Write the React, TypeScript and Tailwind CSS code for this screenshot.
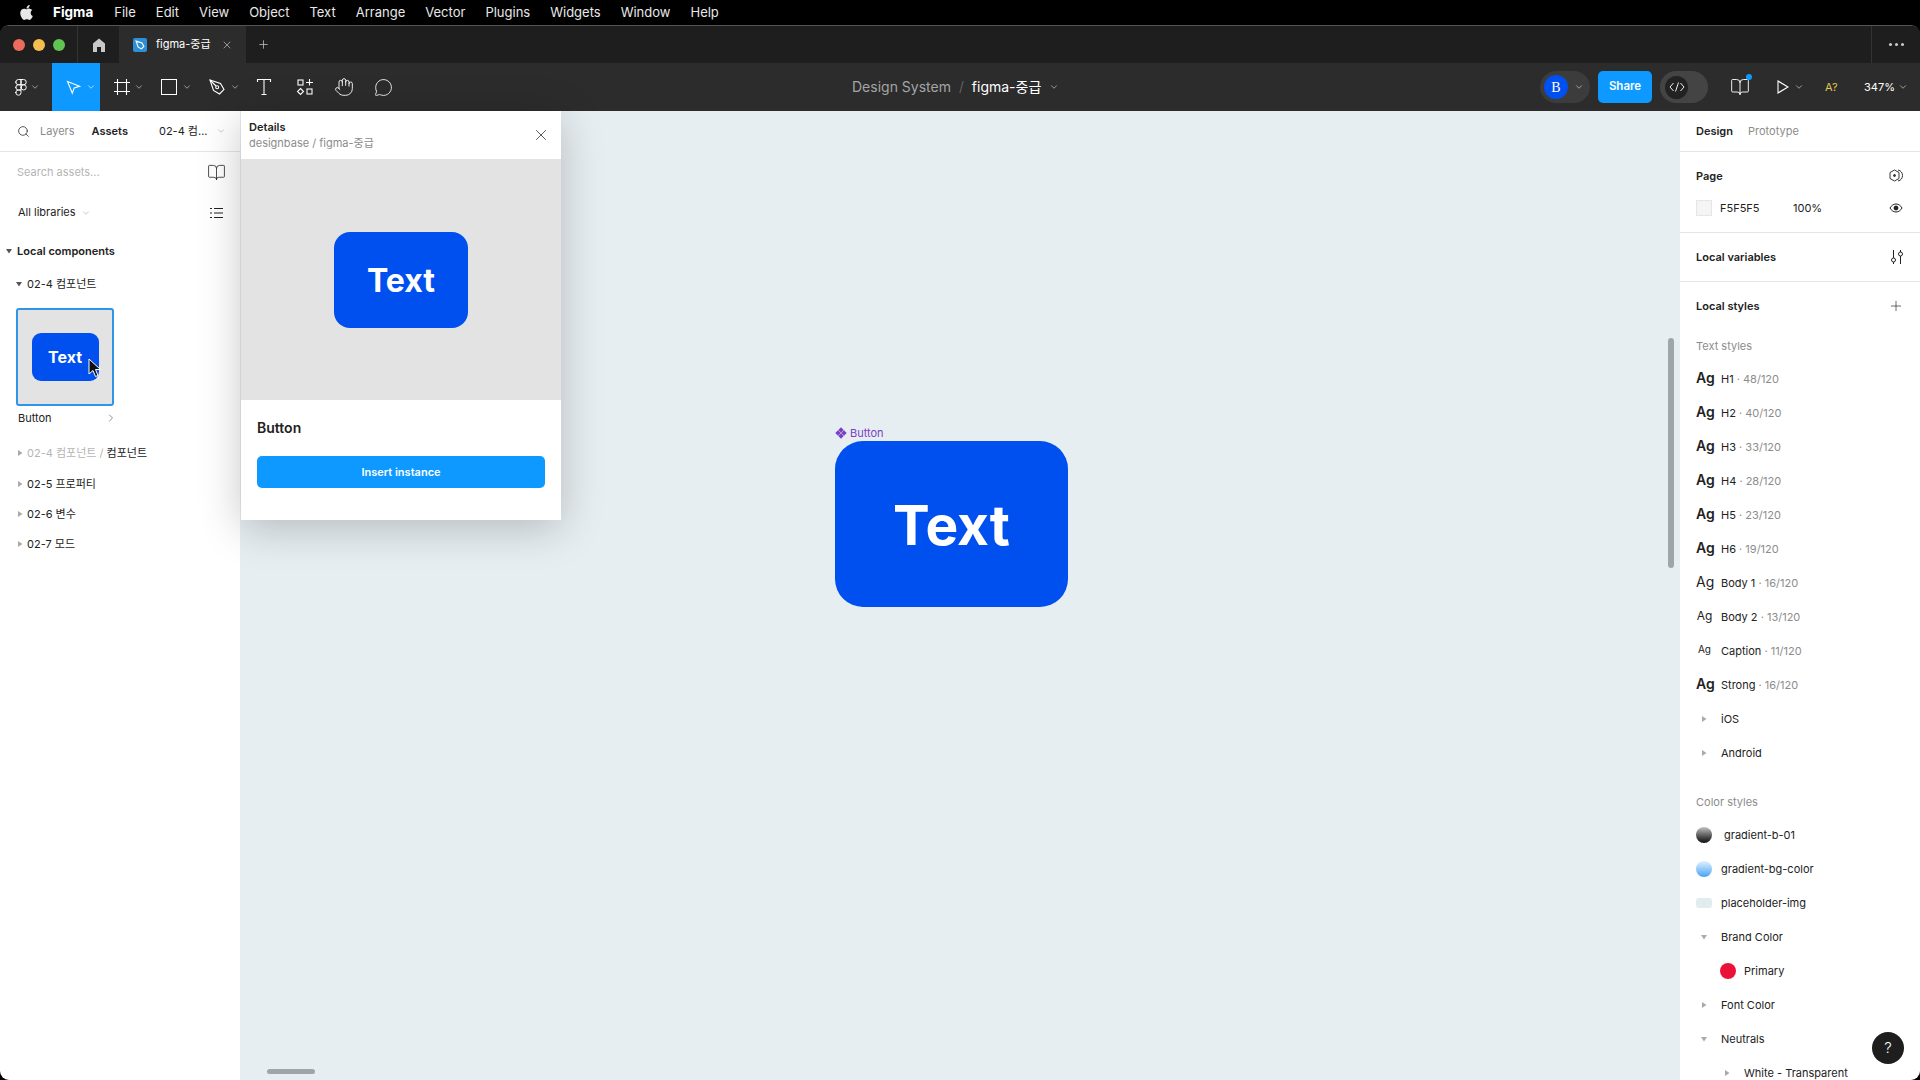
import { BookOpen, ChevronDown, ChevronRight, Figma, Hand, MessageCircle, Plus, Search, X } from 'lucide-react'
import { FaApple } from 'react-icons/fa'

const menus = ['File', 'Edit', 'View', 'Object', 'Text', 'Arrange', 'Vector', 'Plugins', 'Widgets', 'Window', 'Help']

const textStyles = [
  { ag: 'text-[14px] font-semibold', name: 'H1', size: '48/120' },
  { ag: 'text-[14px] font-semibold', name: 'H2', size: '40/120' },
  { ag: 'text-[14px] font-semibold', name: 'H3', size: '33/120' },
  { ag: 'text-[14px] font-semibold', name: 'H4', size: '28/120' },
  { ag: 'text-[14px] font-semibold', name: 'H5', size: '23/120' },
  { ag: 'text-[14px] font-semibold', name: 'H6', size: '19/120' },
  { ag: 'text-[14px] font-normal', name: 'Body 1', size: '16/120' },
  { ag: 'text-[12px] font-normal', name: 'Body 2', size: '13/120' },
  { ag: 'text-[10px] font-normal', name: 'Caption', size: '11/120' },
  { ag: 'text-[14px] font-semibold', name: 'Strong', size: '16/120' },
]

function Tri({ open, className = '' }: { open?: boolean; className?: string }) {
  return (
    <svg width="6" height="6" viewBox="0 0 6 6" className={className}>
      {open ? <path d="M0 1h6L3 5.5z" fill="currentColor" /> : <path d="M1 0v6l4.5-3z" fill="currentColor" />}
    </svg>
  )
}

function Chev({ className = '' }: { className?: string }) {
  return <ChevronDown size={10} strokeWidth={1.5} className={`shrink-0 ${className}`} />
}

function ComponentIcon() {
  return (
    <svg width="18" height="18" viewBox="0 0 18 18" fill="none" stroke="#fff" strokeWidth="1.1">
      <rect x="2" y="2" width="5" height="5" />
      <path d="M13.5 1v6.5M10 4.5h7" />
      <path d="M4.5 10.5l3 3-3 3-3-3z" />
      <rect x="11" y="11" width="5" height="5" />
    </svg>
  )
}

function PenIcon() {
  return (
    <svg width="18" height="18" viewBox="0 0 18 18" fill="none" stroke="#fff" strokeWidth="1.1">
      <path d="M2 2l10.500 3.500 3.500 6-4.500 4.500-6-3.500z" />
      <path d="M2 2l6 6" />
      <circle cx="9.200" cy="9.200" r="1.500" />
    </svg>
  )
}

function ToolBar() {
  return (
    <div className="relative h-[48px] bg-[#2c2c2c] flex items-center text-white shrink-0">
      <div className="w-[52px] flex items-center pl-[12px]">
        <Figma size={18} strokeWidth={1.3} />
        <Chev className="text-[#ddd]" />
      </div>
      <div className="w-[48px] h-[48px] bg-[#0d99ff] flex items-center pl-[13px] gap-[5px]">
        <svg width="16" height="16" viewBox="0 0 16 16" fill="none" stroke="#fff" strokeWidth="1.1">
          <path d="M2.500 2.500l12 4.800-5.300 1.600-1.900 5.400z" />
        </svg>
        <Chev />
      </div>
      <div className="ml-[13px] flex items-center gap-[3px]">
        <svg width="18" height="18" viewBox="0 0 18 18" fill="none" stroke="#fff" strokeWidth="1.1">
          <path d="M4.500 1v16M13.500 1v16M1 4.500h16M1 13.500h16" />
        </svg>
        <Chev className="text-[#ddd]" />
      </div>
      <div className="ml-[17px] flex items-center gap-[5px]">
        <div className="w-[16px] h-[16px] border border-white" />
        <Chev className="text-[#ddd]" />
      </div>
      <div className="ml-[16px] flex items-center gap-[4px]">
        <PenIcon />
        <Chev className="text-[#ddd]" />
      </div>
      <svg width="16" height="18" viewBox="0 0 16 18" fill="none" stroke="#fff" strokeWidth="1.1" className="ml-[16px]">
        <path d="M1.500 4V1.500h13V4M8 1.500v15M5.500 16.500h5" />
      </svg>
      <div className="ml-[24px]"><ComponentIcon /></div>
      <Hand size={20} strokeWidth={1.1} className="ml-[20px]" />
      <MessageCircle size={19} strokeWidth={1.1} className="ml-[20px]" />

      <div className="absolute left-[852px] top-[13px] flex items-center text-[14px]">
        <span className="text-[#a5a5a5]">Design System</span>
        <span className="text-[#6f6f6f] mx-[8px] font-light">/</span>
        <span className="text-white">figma-중급</span>
        <Chev className="ml-[8px] text-[#ddd]" />
      </div>

      <div className="ml-auto flex items-center">
        <div className="w-[50px] h-[32px] rounded-full bg-[#3c3c3c] flex items-center pl-[4px] gap-[6px]">
          <div className="w-[24px] h-[24px] rounded-full bg-[#0050f0] flex items-center justify-center text-[14px]">
            <span style={{ fontFamily: '"Liberation Serif", serif' }}>B</span>
          </div>
          <Chev className="text-[#ddd]" />
        </div>
        <div className="ml-[8px] w-[54px] h-[32px] rounded-[5px] bg-[#0d99ff] flex items-center justify-center text-[11.5px] font-semibold">
          Share
        </div>
        <div className="ml-[8px] w-[48px] h-[32px] rounded-full bg-[#444] flex items-center pl-[5px]">
          <div className="w-[23px] h-[23px] rounded-full bg-[#222] flex items-center justify-center">
            <svg width="16" height="10" viewBox="0 0 16 10" fill="none" stroke="#eee" strokeWidth="1">
              <path d="M4.500 1L1 5l3.500 4M11.500 1L15 5l-3.500 4M9.500 0.500l-3 9" />
            </svg>
          </div>
        </div>
        <div className="relative ml-[22px]">
          <BookOpen size={20} strokeWidth={1.1} />
          <span className="absolute -top-[3px] -right-[2px] w-[6px] h-[6px] rounded-full bg-[#0d99ff]" />
        </div>
        <svg width="12" height="14" viewBox="0 0 12 14" fill="none" stroke="#fff" strokeWidth="1.1" className="ml-[27px]">
          <path d="M1 1v12l10-6z" />
        </svg>
        <Chev className="ml-[5px] text-[#ddd]" />
        <span className="ml-[21px] w-[14px] text-[11px] text-[#e2c94f]">A?</span>
        <span className="ml-[25px] w-[32px] text-[11px]">347%</span>
        <Chev className="ml-[2px] mr-[12px] text-[#ddd]" />
      </div>
    </div>
  )
}

function LeftPanel() {
  return (
    <aside className="w-[240px] shrink-0 bg-white text-[11px] text-[#222]">
      <div className="h-[41px] border-b border-[#e6e6e6] flex items-center pl-[17px]">
        <Search size={13} strokeWidth={1.5} className="text-[#333]" />
        <span className="ml-[10px] text-[#8c8c8c]">Layers</span>
        <span className="ml-[17px] font-semibold">Assets</span>
        <span className="ml-[31px]">02-4 컴...</span>
        <Chev className="ml-[9px] text-[#aaa]" />
      </div>
      <div className="h-[41px] flex items-center justify-between pl-[17px] pr-[14px]">
        <span className="text-[#b5b5b5]">Search assets...</span>
        <BookOpen size={19} strokeWidth={1} />
      </div>
      <div className="h-[39px] flex items-center justify-between pl-[18px] pr-[17px]">
        <span className="flex items-center gap-[5px]">All libraries <Chev className="text-[#aaa]" /></span>
        <svg width="13" height="12" viewBox="0 0 13 12" stroke="#222" strokeWidth="1" fill="none">
          <path d="M0 1.500h2M4 1.500h9M0 6h2M4 6h9M0 10.500h2M4 10.500h9" />
        </svg>
      </div>
      <div className="h-[38px] flex items-center pl-[6px] gap-[5px] font-semibold">
        <Tri open className="text-[#555]" />
        Local components
      </div>
      <div className="h-[28px] flex items-center pl-[16px] gap-[5px]">
        <Tri open className="text-[#555]" />
        02-4 컴포넌트
      </div>
      <div className="relative mt-[10px] ml-[16px] w-[98px] h-[98px] border-2 border-[#2f95e6] rounded-[3px] bg-[#e3e3e3] flex items-center justify-center">
        <div className="w-[67px] h-[48px] rounded-[9px] bg-[#0050f0] flex items-center justify-center text-white text-[16px] font-bold">
          Text
        </div>
        <svg width="14" height="20" viewBox="0 0 14 20" className="absolute left-[70px] top-[48px]">
          <path d="M1 1v15l4-3.500 2.500 6 2.500-1-2.500-6h5z" fill="#111" stroke="#fff" strokeWidth="1" />
        </svg>
      </div>
      <div className="mt-[2px] h-[20px] flex items-center justify-between pl-[18px] w-[117px]">
        Button
        <ChevronRight size={12} strokeWidth={1.2} className="text-[#444]" />
      </div>
      <div className="mt-[9px] flex flex-col">
        <div className="h-[32px] flex items-center pl-[17px] gap-[4px]">
          <Tri className="text-[#aaa]" />
          <span className="text-[#b5b5b5]">02-4 컴포넌트 / <span className="text-[#222]">컴포넌트</span></span>
        </div>
        {['02-5 프로퍼티', '02-6 변수', '02-7 모드'].map((t) => (
          <div key={t} className="h-[30px] flex items-center pl-[17px] gap-[4px]">
            <Tri className="text-[#aaa]" />
            {t}
          </div>
        ))}
      </div>
    </aside>
  )
}

function DetailsPopup() {
  return (
    <div className="absolute left-[1px] top-0 w-[320px] h-[409px] bg-white z-10 shadow-[0_8px_40px_rgba(0,0,0,0.22)] text-[#222] flex flex-col">
      <div className="h-[48px] pl-[8px] pr-[11px] flex items-center justify-between">
        <div className="text-[11px] leading-[16px]">
          <div className="font-semibold">Details</div>
          <div className="text-[#8c8c8c]">designbase / figma-중급</div>
        </div>
        <X size={18} strokeWidth={1} />
      </div>
      <div className="h-[241px] bg-[#e3e3e3] flex items-center justify-center">
        <div className="w-[134px] h-[96px] pt-[2px] rounded-[16px] bg-[#0050f0] flex items-center justify-center text-white text-[32px] font-bold">
          Text
        </div>
      </div>
      <div className="px-[16px] pt-[18px]">
        <div className="text-[14px] font-semibold leading-[20px]">Button</div>
        <div className="mt-[18px] h-[32px] pt-[1px] rounded-[5px] bg-[#0d99ff] text-white text-[11px] font-semibold flex items-center justify-center">
          Insert instance
        </div>
      </div>
    </div>
  )
}

function Canvas() {
  return (
    <main className="relative flex-1 bg-[#e7eef1]">
      <DetailsPopup />
      <div className="absolute left-[595px] top-[314px] flex items-center gap-[3px] text-[11px] text-[#7b3fc4]">
        <svg width="12" height="12" viewBox="0 0 12 12" fill="#7b3fc4">
          <path d="M6 0.300L8.700 3 6 5.700 3.300 3zM6 6.300L8.700 9 6 11.700 3.300 9zM3 3.300L5.700 6 3 8.700 0.300 6zM9 3.300L11.700 6 9 8.700 6.300 6z" />
        </svg>
        Button
      </div>
      <div className="absolute left-[595px] top-[330px] w-[233px] h-[166px] pt-[2px] rounded-[28px] bg-[#0050f0] flex items-center justify-center text-white text-[55px] font-bold">
        Text
      </div>
      <div className="absolute left-[1428px] top-[227px] w-[6px] h-[230px] rounded-full bg-[#a0a5a9]" />
      <div className="absolute left-[27px] bottom-[6px] w-[48px] h-[5px] rounded-full bg-[#a0a5a9]" />
    </main>
  )
}

function PanelRow({ children, open, indent = 'pl-[21px]' }: { children: React.ReactNode; open?: boolean; indent?: string }) {
  return (
    <div className={`h-[34px] flex items-center ${indent} gap-[14px] shrink-0`}>
      <Tri open={open} className="text-[#aaa]" />
      {children}
    </div>
  )
}

function RightPanel() {
  return (
    <aside className="relative w-[240px] shrink-0 bg-white text-[11px] text-[#222] overflow-hidden flex flex-col">
      <div className="h-[41px] border-b border-[#e6e6e6] flex items-center pl-[16px] gap-[15px] shrink-0">
        <span className="font-semibold">Design</span>
        <span className="text-[#8c8c8c]">Prototype</span>
      </div>
      <div className="h-[81px] border-b border-[#e6e6e6] px-[16px] shrink-0">
        <div className="h-[48px] flex items-center justify-between font-semibold">
          Page
          <svg width="16" height="16" viewBox="0 0 16 16" fill="none" stroke="#333" strokeWidth="1">
            <path d="M6.500 2l4.500 2.500v6L6.500 13 2 10.500v-6zM10 2c3 .500 4.500 3 4.500 5.500S13 12.500 10 13" />
            <circle cx="6.500" cy="7.500" r="1" fill="#333" />
          </svg>
        </div>
        <div className="h-[16px] flex items-center">
          <div className="w-[16px] h-[16px] bg-[#f5f5f5] border border-[#e6e6e6]" />
          <span className="ml-[8px] w-[73px]">F5F5F5</span>
          <span>100%</span>
          <svg width="14" height="10" viewBox="0 0 14 10" className="ml-auto mr-[1px]" fill="none" stroke="#222" strokeWidth="1">
            <path d="M1 5c1.500-2.600 3.500-4 6-4s4.500 1.400 6 4c-1.500 2.600-3.500 4-6 4S2.500 7.600 1 5z" />
            <circle cx="7" cy="5" r="2" fill="#222" />
          </svg>
        </div>
      </div>
      <div className="h-[49px] border-b border-[#e6e6e6] px-[16px] flex items-center justify-between font-semibold shrink-0">
        Local variables
        <svg width="14" height="16" viewBox="0 0 14 16" fill="none" stroke="#222" strokeWidth="1">
          <path d="M3.500 1v8M3.500 13v2M10.500 1v2M10.500 7v8" />
          <circle cx="3.500" cy="11" r="2" />
          <circle cx="10.500" cy="5" r="2" />
        </svg>
      </div>
      <div className="h-[48px] pl-[16px] pr-[16px] flex items-center justify-between font-semibold shrink-0">
        Local styles
        <Plus size={16} strokeWidth={1} className="text-[#222]" />
      </div>
      <div className="h-[32px] pl-[16px] flex items-center text-[#8c8c8c] shrink-0">Text styles</div>
      {textStyles.map((s) => (
        <div key={s.name} className="h-[34px] pl-[16px] flex items-center gap-[8px] shrink-0">
          <span className={`w-[17px] text-center mb-[3px] ${s.ag}`}>Ag</span>
          <span>
            {s.name} <span className="text-[#8c8c8c]">· {s.size}</span>
          </span>
        </div>
      ))}
      <PanelRow>iOS</PanelRow>
      <PanelRow>Android</PanelRow>
      <div className="mt-[16px] h-[32px] pl-[16px] flex items-center text-[#8c8c8c] shrink-0">Color styles</div>
      <div className="h-[34px] pl-[16px] flex items-center gap-[12px] shrink-0">
        <span className="w-[16px] h-[16px] rounded-full bg-linear-to-b from-[#c4c4c4] to-[#111]" />
        gradient-b-01
      </div>
      <div className="h-[34px] pl-[16px] flex items-center gap-[9px] shrink-0">
        <span className="w-[16px] h-[16px] rounded-full bg-linear-to-b from-[#e0f0fc] to-[#3fa3f5]" />
        gradient-bg-color
      </div>
      <div className="h-[34px] pl-[16px] flex items-center gap-[9px] shrink-0">
        <span className="w-[16px] h-[10px] rounded-[3px] bg-[#e0ecee]" />
        placeholder-img
      </div>
      <PanelRow open>Brand Color</PanelRow>
      <div className="h-[34px] pl-[40px] flex items-center gap-[8px] shrink-0">
        <span className="w-[16px] h-[16px] rounded-full bg-[#eb1239]" />
        Primary
      </div>
      <PanelRow>Font Color</PanelRow>
      <PanelRow open>Neutrals</PanelRow>
      <PanelRow indent="pl-[44px]">White - Transparent</PanelRow>
      <div className="absolute left-[192px] top-[921px] w-[32px] h-[32px] rounded-full bg-[#1e1e1e] text-white flex items-center justify-center text-[15px] font-light">
        ?
      </div>
    </aside>
  )
}

export default function App() {
  return (
    <div className="w-[1920px] h-[1080px] bg-black overflow-hidden flex flex-col" style={{ fontFamily: 'Inter, "Noto Sans CJK KR", sans-serif' }}>
      <div className="h-[25px] shrink-0 flex items-center text-white text-[13px]">
        <FaApple size={17} className="ml-[18px] text-[#e8e8e8]" />
        <span className="ml-[18px] font-bold text-[13.5px]">Figma</span>
        <div className="ml-[21px] flex gap-[20px] text-[#e8e8e8]">
          {menus.map((m) => (
            <span key={m}>{m}</span>
          ))}
        </div>
      </div>
      <div className="relative flex-1 flex flex-col rounded-[9px] overflow-hidden border-t border-[#555]">
        <div className="h-[37px] bg-[#1e1e1e] flex items-center shrink-0 text-white">
          <div className="w-[78px] h-full border-r border-[#333] flex items-center pl-[13px] gap-[8px]">
            <span className="w-[12px] h-[12px] rounded-full bg-[#ed6a5e]" />
            <span className="w-[12px] h-[12px] rounded-full bg-[#f4bf4f]" />
            <span className="w-[12px] h-[12px] rounded-full bg-[#61c554]" />
          </div>
          <div className="w-[41px] flex justify-center">
            <svg width="14" height="14" viewBox="0 0 14 14" fill="#c8c8c8">
              <path d="M7 0.500L13 5.500V14H9V9H5v5H1V5.500z" />
            </svg>
          </div>
          <div className="w-[127px] h-full bg-[#2c2c2c] flex items-center pl-[14px] text-[11px]">
            <div className="w-[14px] h-[14px] rounded-[2px] bg-[#2d8fd6] flex items-center justify-center">
              <svg width="10" height="10" viewBox="0 0 18 18" fill="none" stroke="#fff" strokeWidth="2">
                <path d="M2 2l10.500 3.500 3.500 6-4.500 4.500-6-3.500z" />
              </svg>
            </div>
            <span className="ml-[9px]">figma-중급</span>
            <X size={12} strokeWidth={1.5} className="ml-[10px] text-[#bbb]" />
          </div>
          <Plus size={13} strokeWidth={1.5} className="ml-[11px] text-[#bbb]" />
          <div className="ml-auto w-[49px] h-full border-l border-[#333] flex items-center justify-center gap-[3px]">
            <span className="w-[3px] h-[3px] rounded-full bg-[#ccc]" />
            <span className="w-[3px] h-[3px] rounded-full bg-[#ccc]" />
            <span className="w-[3px] h-[3px] rounded-full bg-[#ccc]" />
          </div>
        </div>
        <ToolBar />
        <div className="flex-1 flex min-h-0">
          <LeftPanel />
          <Canvas />
          <RightPanel />
        </div>
      </div>
    </div>
  )
}
